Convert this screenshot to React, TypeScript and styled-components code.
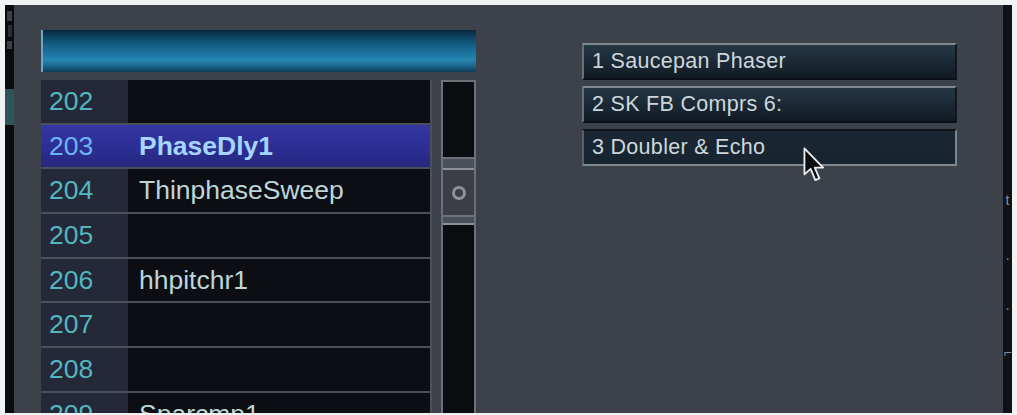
import React from "react";
import styled, { createGlobalStyle } from "styled-components";

const Global = createGlobalStyle`
  html, body { margin: 0; padding: 0; background: #f1f2f3; }
  body { font-family: "Liberation Sans", Arial, sans-serif; }
`;

const Frame = styled.div`
  width: 1017px;
  height: 415px;
  box-sizing: border-box;
  padding: 5px 5px 2px 5px;
  display: flex;
  background: #f1f2f3;
  overflow: hidden;
`;

const LeftStrip = styled.div`
  width: 9px;
  flex: none;
  background: #0a0b0e;
  display: flex;
  flex-direction: column;
  align-items: center;
  padding-top: 6px;
  gap: 4px;
`;

const StripMark = styled.div<{ $h: number; $c: string; $w?: number }>`
  width: ${(p) => p.$w ?? 6}px;
  height: ${(p) => p.$h}px;
  background: ${(p) => p.$c};
  flex: none;
`;

const RightStrip = styled.div`
  width: 9px;
  flex: none;
  background: #101216;
  display: flex;
  flex-direction: column;
  align-items: center;
  padding-top: 188px;
  color: #8a8f96;
  font-size: 14px;
  line-height: 1;
`;

const RightMark = styled.span<{ $mt: number }>`
  margin-top: ${(p) => p.$mt}px;
  display: block;
`;

const Panel = styled.div`
  flex: 1;
  background: #3d424a;
  display: flex;
  align-items: flex-start;
  padding: 25px 0 0 27px;
  overflow: hidden;
`;

const Browser = styled.div`
  width: 435px;
  flex: none;
  display: flex;
  flex-direction: column;
`;

const HeaderBar = styled.div`
  height: 42px;
  box-sizing: border-box;
  border-left: 2px solid #6aa9c6;
  background: linear-gradient(
    180deg,
    #082639 0%,
    #0d4666 18%,
    #17648c 40%,
    #1f7aa6 62%,
    #2686b2 72%,
    #1a6489 86%,
    #0e3b57 100%
  );
`;

const ListArea = styled.div`
  margin-top: 8px;
  height: 340px;
  display: flex;
  gap: 9px;
`;

const List = styled.div`
  width: 391px;
  flex: none;
  display: flex;
  flex-direction: column;
  gap: 2px;
  background: #4a4f5a;
  border-right: 2px solid #4a4f5a;
  box-sizing: border-box;
  overflow: hidden;
`;

const Row = styled.div<{ $selected?: boolean }>`
  height: 42.7px;
  flex: none;
  display: grid;
  grid-template-columns: 87px 1fr;
  font-size: 26.5px;
  background: ${(p) =>
    p.$selected
      ? "linear-gradient(180deg, #3537a4 0%, #2c2e93 55%, #26287f 100%)"
      : "#0c0e13"};
`;

const NumCell = styled.div<{ $selected?: boolean }>`
  display: flex;
  align-items: center;
  padding-left: 8px;
  background: ${(p) => (p.$selected ? "transparent" : "#242839")};
  color: ${(p) => (p.$selected ? "#6cb4f2" : "#52b7be")};
`;

const NameCell = styled.div<{ $selected?: boolean }>`
  display: flex;
  align-items: center;
  padding-left: 11px;
  color: ${(p) => (p.$selected ? "#a6d5ff" : "#bdd6da")};
  font-weight: ${(p) => (p.$selected ? 700 : 400)};
  white-space: nowrap;
`;

const Scrollbar = styled.div`
  width: 35px;
  flex: none;
  box-sizing: border-box;
  border: 2px solid #6c7179;
  border-bottom: none;
  background: #0b0c10;
  display: flex;
  flex-direction: column;
`;

const TrackGap = styled.div<{ $h: number }>`
  height: ${(p) => p.$h}px;
  flex: none;
`;

const Grip = styled.div<{ $h: number }>`
  height: ${(p) => p.$h}px;
  flex: none;
  box-sizing: border-box;
  background: #4b4f57;
  border-top: 2px solid #6d7179;
  border-bottom: 2px solid #8d9198;
`;

const Thumb = styled.div`
  height: 45px;
  flex: none;
  background: #3b3e44;
  display: flex;
  align-items: center;
  justify-content: center;
`;

const Slots = styled.div`
  margin: 13px 0 0 106px;
  width: 375px;
  flex: none;
  display: flex;
  flex-direction: column;
  gap: 6px;
`;

const Slot = styled.div<{ $active?: boolean }>`
  position: relative;
  height: 37px;
  box-sizing: border-box;
  display: flex;
  align-items: center;
  padding-left: 8px;
  font-size: 21.5px;
  letter-spacing: 0.3px;
  color: #cdd7db;
  white-space: nowrap;
  background: ${(p) =>
    p.$active
      ? "linear-gradient(180deg, #1a2733 0%, #18242f 100%)"
      : "linear-gradient(180deg, #263744 0%, #1b2935 50%, #111a23 100%)"};
  border-top: 2px solid ${(p) => (p.$active ? "#0e141a" : "#7d888f")};
  border-left: 2px solid ${(p) => (p.$active ? "#55626b" : "#66727a")};
  border-right: 2px solid ${(p) => (p.$active ? "#7b878e" : "#0f161d")};
  border-bottom: 2px solid ${(p) => (p.$active ? "#7f8a91" : "#0a1016")};
`;

const Pointer = styled.svg`
  position: absolute;
  left: 219px;
  top: 16px;
  width: 23px;
  height: 36px;
  pointer-events: none;
`;

type Entry = { num: number; name?: string };

const entries: Entry[] = [
  { num: 202 },
  { num: 203, name: "PhaseDly1" },
  { num: 204, name: "ThinphaseSweep" },
  { num: 205 },
  { num: 206, name: "hhpitchr1" },
  { num: 207 },
  { num: 208 },
  { num: 209, name: "Sparcmp1" },
];

const slotNames = ["1 Saucepan Phaser", "2 SK FB Comprs 6:", "3 Doubler & Echo"];

export default function App() {
  return (
    <>
      <Global />
      <Frame>
        <LeftStrip>
          <StripMark $h={10} $c="#3a3e45" $w={5} />
          <StripMark $h={12} $c="#2b2e34" $w={4} />
          <StripMark $h={8} $c="#3a3e45" $w={5} />
          <StripMark $h={32} $c="#0a0b0e" />
          <StripMark $h={36} $c="#2c5658" $w={9} />
        </LeftStrip>
        <Panel>
          <Browser>
            <HeaderBar />
            <ListArea>
              <List>
                {entries.map((e) => (
                  <Row key={e.num} $selected={e.num === 203}>
                    <NumCell $selected={e.num === 203}>{e.num}</NumCell>
                    <NameCell $selected={e.num === 203}>{e.name ?? ""}</NameCell>
                  </Row>
                ))}
              </List>
              <Scrollbar>
                <TrackGap $h={75} />
                <Grip $h={13} />
                <Thumb>
                  <svg width="18" height="18" viewBox="0 0 18 18">
                    <circle cx="9" cy="9" r="5.5" fill="none" stroke="#8e9299" strokeWidth="3" />
                  </svg>
                </Thumb>
                <Grip $h={10} />
              </Scrollbar>
            </ListArea>
          </Browser>
          <Slots>
            {slotNames.map((n, i) => (
              <Slot key={n} $active={i === 2}>
                {n}
                {i === 2 && (
                  <Pointer viewBox="0 0 16 25">
                    <path
                      d="M1 1 L1 19 L5.3 15.2 L8.6 23 L11.4 21.8 L8.2 14.3 L14 14.3 Z"
                      fill="#0b0d10"
                      stroke="#e8ecef"
                      strokeWidth="1.3"
                      strokeLinejoin="round"
                    />
                  </Pointer>
                )}
              </Slot>
            ))}
          </Slots>
        </Panel>
        <RightStrip>
          <RightMark $mt={0}>t</RightMark>
          <RightMark $mt={44}>·</RightMark>
          <RightMark $mt={36}>·</RightMark>
          <RightMark $mt={30}>⌐</RightMark>
        </RightStrip>
      </Frame>
    </>
  );
}
